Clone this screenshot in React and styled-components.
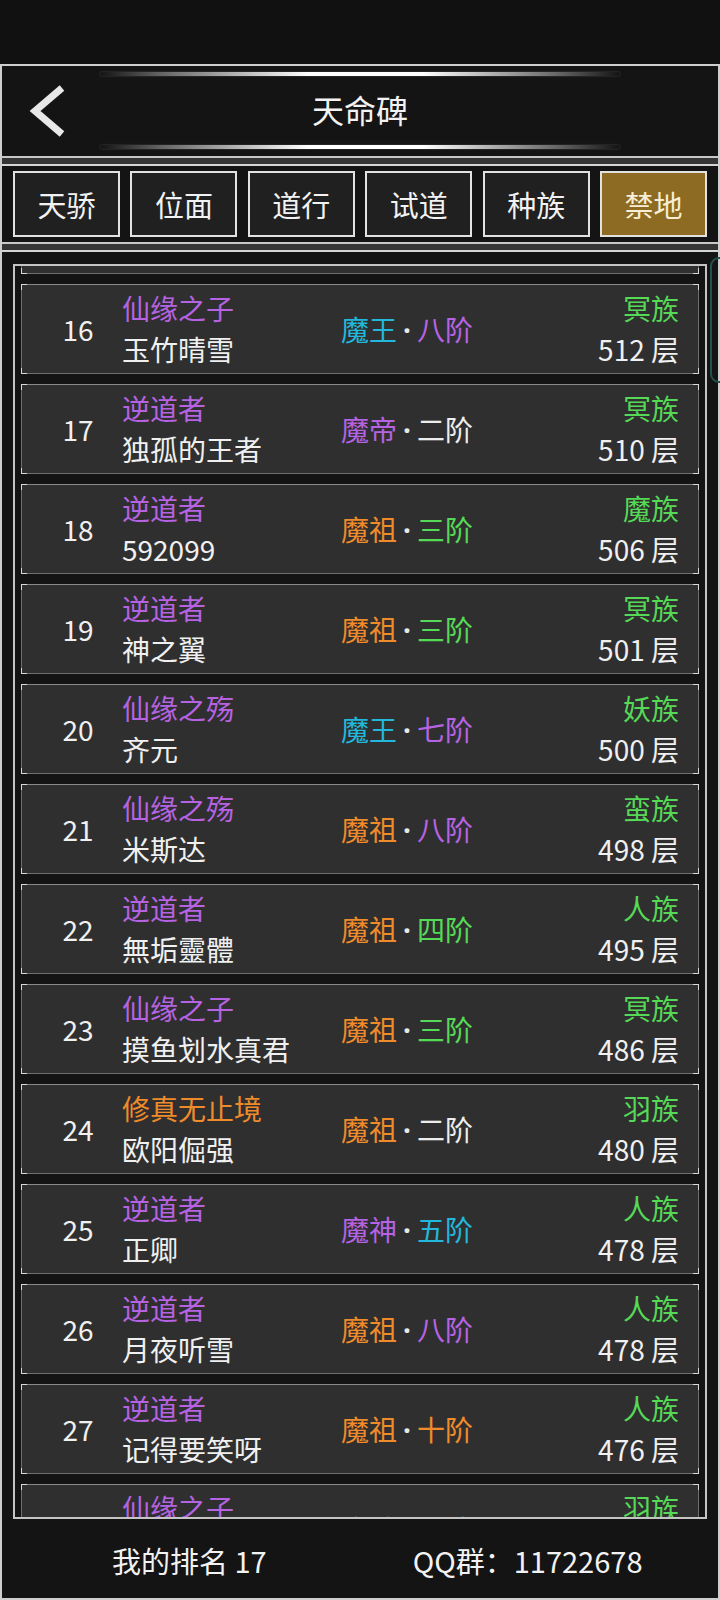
import { useLayoutEffect, useRef } from "react";
import styled, { createGlobalStyle } from "styled-components";

const Color = {
    purple: "#b663e3",
    cyan: "#22b7db",
    green: "#56d957",
    orange: "#ef8b2b",
    white: "#ededed",
};

const tabs = ["天骄", "位面", "道行", "试道", "种族", "禁地"];

// 排行データ
const rows = [
    { rank: 16, title: "仙缘之子", titleColor: Color.purple, name: "玉竹晴雪", realm: "魔王", realmColor: Color.cyan, stage: "八阶", stageColor: Color.purple, race: "冥族", floor: 512 },
    { rank: 17, title: "逆道者", titleColor: Color.purple, name: "独孤的王者", realm: "魔帝", realmColor: Color.purple, stage: "二阶", stageColor: Color.white, race: "冥族", floor: 510 },
    { rank: 18, title: "逆道者", titleColor: Color.purple, name: "592099", realm: "魔祖", realmColor: Color.orange, stage: "三阶", stageColor: Color.green, race: "魔族", floor: 506 },
    { rank: 19, title: "逆道者", titleColor: Color.purple, name: "神之翼", realm: "魔祖", realmColor: Color.orange, stage: "三阶", stageColor: Color.green, race: "冥族", floor: 501 },
    { rank: 20, title: "仙缘之殇", titleColor: Color.purple, name: "齐元", realm: "魔王", realmColor: Color.cyan, stage: "七阶", stageColor: Color.purple, race: "妖族", floor: 500 },
    { rank: 21, title: "仙缘之殇", titleColor: Color.purple, name: "米斯达", realm: "魔祖", realmColor: Color.orange, stage: "八阶", stageColor: Color.purple, race: "蛮族", floor: 498 },
    { rank: 22, title: "逆道者", titleColor: Color.purple, name: "無垢靈體", realm: "魔祖", realmColor: Color.orange, stage: "四阶", stageColor: Color.green, race: "人族", floor: 495 },
    { rank: 23, title: "仙缘之子", titleColor: Color.purple, name: "摸鱼划水真君", realm: "魔祖", realmColor: Color.orange, stage: "三阶", stageColor: Color.green, race: "冥族", floor: 486 },
    { rank: 24, title: "修真无止境", titleColor: Color.orange, name: "欧阳倔强", realm: "魔祖", realmColor: Color.orange, stage: "二阶", stageColor: Color.white, race: "羽族", floor: 480 },
    { rank: 25, title: "逆道者", titleColor: Color.purple, name: "正卿", realm: "魔神", realmColor: Color.purple, stage: "五阶", stageColor: Color.cyan, race: "人族", floor: 478 },
    { rank: 26, title: "逆道者", titleColor: Color.purple, name: "月夜听雪", realm: "魔祖", realmColor: Color.orange, stage: "八阶", stageColor: Color.purple, race: "人族", floor: 478 },
    { rank: 27, title: "逆道者", titleColor: Color.purple, name: "记得要笑呀", realm: "魔祖", realmColor: Color.orange, stage: "十阶", stageColor: Color.orange, race: "人族", floor: 476 },
    { rank: 28, title: "仙缘之子", titleColor: Color.purple, name: "风吟", realm: "魔神", realmColor: Color.purple, stage: "五阶", stageColor: Color.cyan, race: "羽族", floor: 472 },
];

export default function App() {
    const listRef = useRef(null);

    useLayoutEffect(() => {
        // 前の行が枠だけ見える位置までスクロール
        if (listRef.current) listRef.current.scrollTop = 90;
    }, []);

    return (
        <>
            <GlobalStyle />
            <StatusBar />
            <Panel>
                <Header>
                    <Glow />
                    <HeaderRow>
                        <BackButton aria-label="back">
                            <svg width="40" height="52" viewBox="0 0 40 52">
                                <polyline points="33,3 6,26 33,49" fill="none" stroke="#e8e8e8" strokeWidth="7" />
                            </svg>
                        </BackButton>
                        <Title>天命碑</Title>
                        <span />
                    </HeaderRow>
                    <Glow />
                </Header>
                <Divider />
                <TabBar>
                    {tabs.map((t) => (
                        <Tab key={t} $active={t === "禁地"}>{t}</Tab>
                    ))}
                </TabBar>
                <Divider />
                <ListArea>
                    <ListBox ref={listRef}>
                        <Card />
                        {rows.map((r) => (
                            <Card key={r.rank}>
                                <Rank>{r.rank}</Rank>
                                <NameCol>
                                    <Line style={{ color: r.titleColor }}>{r.title}</Line>
                                    <Line>{r.name}</Line>
                                </NameCol>
                                <Realm>
                                    <span style={{ color: r.realmColor }}>{r.realm}</span>
                                    <Dot>·</Dot>
                                    <span style={{ color: r.stageColor }}>{r.stage}</span>
                                </Realm>
                                <RaceCol>
                                    <Line $color={Color.green}>{r.race}</Line>
                                    <Line>{r.floor} 层</Line>
                                </RaceCol>
                            </Card>
                        ))}
                    </ListBox>
                    <ScrollThumb />
                </ListArea>
                <Footer>
                    <span>我的排名 17</span>
                    <span>QQ群：11722678</span>
                </Footer>
            </Panel>
        </>
    );
}

const GlobalStyle = createGlobalStyle`
    html, body {
        margin: 0;
        padding: 0;
        background-color: #111111;
        overflow: hidden;
    }
    body {
        font-family: "Noto Sans CJK SC", "Noto Sans", sans-serif;
        color: #f0f0f0;
    }
    * {
        box-sizing: border-box;
    }
`
const StatusBar = styled.div`
    height: 64px;
    background-color: #111111;
`
const Panel = styled.div`
    height: 1536px;
    border: 2px solid #cfcfcf;
    background-color: #141414;
    display: flex;
    flex-direction: column;
`
const Header = styled.div`
    height: 90px;
    display: flex;
    flex-direction: column;
    align-items: center;
    padding-top: 6px;
`
const Glow = styled.div`
    width: 520px;
    height: 4px;
    border-radius: 2px;
    background: linear-gradient(90deg, rgba(255,255,255,0) 0%, rgba(255,255,255,0.35) 12%, #ffffff 40%, #ffffff 62%, rgba(255,255,255,0.35) 88%, rgba(255,255,255,0) 100%);
    box-shadow: 0 0 2px rgba(255,255,255,0.25);
`
const HeaderRow = styled.div`
    width: 100%;
    height: 69px;
    display: grid;
    grid-template-columns: 100px 1fr 100px;
    align-items: center;
`
const BackButton = styled.button`
    border: none;
    background: transparent;
    padding: 0 0 0 27px;
    display: flex;
    align-items: center;
    height: 100%;
`
const Title = styled.h1`
    margin: 0 0 4px;
    text-align: center;
    font-size: 32px;
    font-weight: normal;
    color: #f2f2f2;
`
const Divider = styled.div`
    height: 10px;
    background-color: #353535;
    border-top: 2px solid #c8c8c8;
    border-bottom: 2px solid #d4d4d4;
`
const TabBar = styled.div`
    height: 76px;
    padding: 5px 11px;
    display: flex;
    gap: 10.5px;
`
const Tab = styled.div`
    flex: 1;
    display: flex;
    align-items: center;
    justify-content: center;
    border: 2px solid #e2e2e2;
    background-color: ${(p) => (p.$active ? "#8e6b22" : "#202020")};
    color: ${(p) => (p.$active ? "#f7eed4" : "#f2f2f2")};
    font-size: 29px;
    line-height: 1.2;
`
const ListArea = styled.div`
    position: relative;
    flex: 1;
    min-height: 0;
    padding: 12px 11px 2px;
    display: flex;
`
const ListBox = styled.div`
    flex: 1;
    overflow: hidden;
    border: 2px solid #c4c4c4;
    padding: 8px 6px;
    display: flex;
    flex-direction: column;
    gap: 10px;
`
const ScrollThumb = styled.div`
    position: absolute;
    top: 5px;
    right: -10px;
    width: 18px;
    height: 126px;
    border: 2px solid #24524b;
    border-radius: 10px;
`
const Card = styled.div`
    position: relative;
    flex: none;
    height: 90px;
    border: 1px solid #6e6e6e;
    border-top-color: #8a8a8a;
    background-color: #2f2f2f;
    display: grid;
    grid-template-columns: 100px 200px 170px 1fr;
    align-items: center;
    padding-right: 19px;
    font-size: 28px;

    &::before {
        content: "";
        position: absolute;
        inset: -1px;
        pointer-events: none;
        background:
            linear-gradient(#d8d8d8, #d8d8d8) left top / 1px 6px no-repeat,
            linear-gradient(#d8d8d8, #d8d8d8) left top / 6px 1px no-repeat,
            linear-gradient(#d8d8d8, #d8d8d8) right top / 1px 6px no-repeat,
            linear-gradient(#d8d8d8, #d8d8d8) right top / 6px 1px no-repeat,
            linear-gradient(#d8d8d8, #d8d8d8) left bottom / 1px 6px no-repeat,
            linear-gradient(#d8d8d8, #d8d8d8) left bottom / 6px 1px no-repeat,
            linear-gradient(#d8d8d8, #d8d8d8) right bottom / 1px 6px no-repeat,
            linear-gradient(#d8d8d8, #d8d8d8) right bottom / 6px 1px no-repeat;
    }
`
const Rank = styled.div`
    padding-left: 12px;
    text-align: center;
    color: #f0f0f0;
`
const NameCol = styled.div`
    display: flex;
    flex-direction: column;
    white-space: nowrap;
`
const Line = styled.div`
    line-height: 41px;
    color: ${(p) => p.$color || "#f0f0f0"};
`
const Realm = styled.div`
    text-align: center;
    white-space: nowrap;
`
const Dot = styled.span`
    font-family: "Noto Sans", sans-serif;
    font-weight: bold;
    color: #e8e8e8;
    margin: 0 6px;
`
const RaceCol = styled.div`
    display: flex;
    flex-direction: column;
    align-items: flex-end;
    white-space: nowrap;
`
const Footer = styled.div`
    height: 77px;
    display: flex;
    align-items: center;
    padding-left: 110px;
    gap: 146px;
    font-size: 29px;
    color: #f2f2f2;
`
